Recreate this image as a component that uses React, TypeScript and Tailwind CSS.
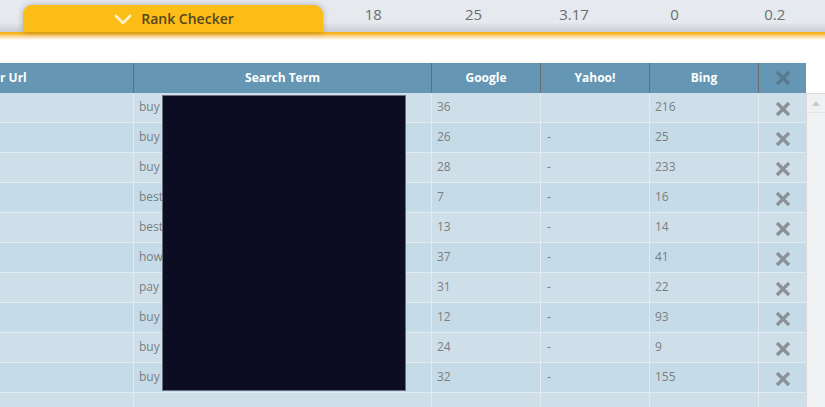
const rows = [
  { term: 'buy',  google: '36', yahoo: '',  bing: '216' },
  { term: 'buy',  google: '26', yahoo: '-', bing: '25' },
  { term: 'buy',  google: '28', yahoo: '-', bing: '233' },
  { term: 'best', google: '7',  yahoo: '-', bing: '16' },
  { term: 'best', google: '13', yahoo: '-', bing: '14' },
  { term: 'how',  google: '37', yahoo: '-', bing: '41' },
  { term: 'pay',  google: '31', yahoo: '-', bing: '22' },
  { term: 'buy',  google: '12', yahoo: '-', bing: '93' },
  { term: 'buy',  google: '24', yahoo: '-', bing: '9' },
  { term: 'buy',  google: '32', yahoo: '-', bing: '155' },
]

const stats = ['18', '25', '3.17', '0', '0.2']

const cols = 'grid grid-cols-[133px_298px_109px_109px_109px_48px]'

function XMark({ color }: { color: string }) {
  return (
    <svg width="16" height="16" viewBox="0 0 16 16">
      <path d="M2 2 L14 14 M14 2 L2 14" stroke={color} strokeWidth="3.3" strokeLinecap="butt" />
    </svg>
  )
}

// wide, flat chevron as in the tab
function Chevron() {
  return (
    <svg width="18" height="12" viewBox="0 0 18 12">
      <path d="M2 3 L9 10 L16 3" fill="none" stroke="#fdf2d0" strokeWidth="2.6" strokeLinecap="round" strokeLinejoin="round" />
    </svg>
  )
}

export default function App() {
  return (
    <div className="w-[825px] h-[407px] overflow-hidden bg-white text-[12px]"
      style={{ fontFamily: '"Open Sans", "Liberation Sans", sans-serif' }}>

      {/* ── Top bar ── */}
      <div className="h-[32px] flex bg-gradient-to-b from-[#e6e9ed] from-70% to-[#c9ccd0]">
        <div className="w-[23px] shrink-0" />
        <div className="w-[300px] shrink-0 mt-[5px] rounded-t-[9px] bg-[#fcbd16] shadow-[0_0_6px_rgba(0,0,0,0.25)] flex items-center justify-center gap-[9px] pl-[2px]">
          <Chevron />
          <span className="text-[14px] font-semibold text-[#54461f] leading-none">Rank Checker</span>
        </div>
        <div className="flex-1 flex">
          {stats.map((s, i) => (
            <div key={i} className="flex-1 pt-[3px] text-center text-[15px] text-[#6b6e72] leading-[22px]">{s}</div>
          ))}
        </div>
      </div>

      {/* ── Orange fade line ── */}
      <div className="h-[8px] bg-gradient-to-b from-[#f7b41c] from-20% to-white" />

      <div className="h-[23px]" />

      {/* ── Table ── */}
      <div className="relative flex">
        <div className="w-[806px]">
          <div className={`${cols} h-[30px] bg-[#6596b3] text-white font-bold text-[12px]`}>
            <div className="flex items-center pl-0">r Url</div>
            <div className="flex items-center justify-center border-l border-[#6c6c6c]">Search Term</div>
            <div className="flex items-center justify-center border-l border-[#6c6c6c]">Google</div>
            <div className="flex items-center justify-center border-l border-[#6c6c6c]">Yahoo!</div>
            <div className="flex items-center justify-center border-l border-[#6c6c6c]">Bing</div>
            <div className="flex items-center justify-center border-l border-[#6c6c6c]">
              <XMark color="#587a8e" />
            </div>
          </div>

          {[...rows, null].map((r, i) => (
            <div key={i}
              className={`${cols} h-[30px] border-b border-[#e4ebf0] text-[#7b7e80] ${i % 2 === 0 ? 'bg-[#cfdfe9]' : 'bg-[#c5dce8]'}`}>
              <div />
              <div className="border-l border-[#e4ebf0] pl-[5px] pt-[5px] leading-[18px]">{r?.term}</div>
              <div className="border-l border-[#e4ebf0] pl-[5px] pt-[5px] leading-[18px]">{r?.google}</div>
              <div className="border-l border-[#e4ebf0] pl-[6px] pt-[5px] leading-[18px]">{r?.yahoo}</div>
              <div className="border-l border-[#e4ebf0] pl-[5px] pt-[5px] leading-[18px]">{r?.bing}</div>
              <div className="border-l border-[#e4ebf0] flex items-center justify-center pt-[2px]">
                {r && <XMark color="#8b9196" />}
              </div>
            </div>
          ))}
        </div>

        {/* Scrollbar */}
        <div className="w-[19px] mt-[30px] bg-[#f0f1f3] border-l border-t border-[#d8dadc]">
          <div className="h-[19px] flex items-center justify-center border-b border-[#e2e4e6]">
            <div className="w-0 h-0 border-l-[4px] border-r-[4px] border-b-[5px] border-l-transparent border-r-transparent border-b-[#c6c8ca]" />
          </div>
        </div>

        {/* Redaction box */}
        <div className="absolute left-[162px] top-[32px] w-[244px] h-[296px] bg-[#0c0c22] border border-[#6c6f7c]" />
      </div>
    </div>
  )
}
